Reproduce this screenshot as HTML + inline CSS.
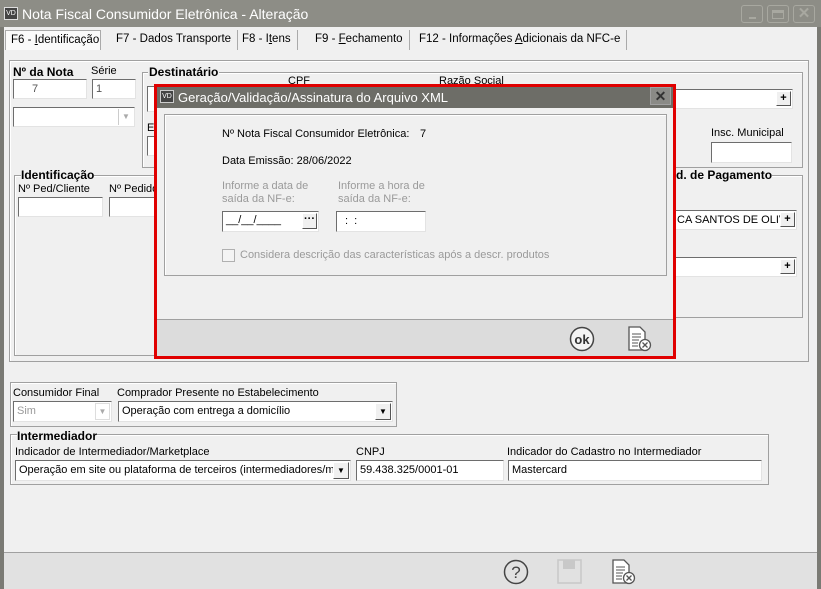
<!DOCTYPE html><html><head><meta charset="utf-8"><style>
*{box-sizing:border-box;margin:0;padding:0}
body{width:821px;height:589px;position:relative;overflow:hidden;background:#f0f0f0;font-family:"Liberation Sans",sans-serif;font-size:11px;color:#000}
.a{position:absolute;white-space:nowrap}
.in{position:absolute;white-space:nowrap;overflow:hidden;background:#fff;border:1px solid #a0a0a0;border-top-color:#6d6d6d;border-left-color:#6d6d6d;border-right-color:#e3e3e3;border-bottom-color:#e3e3e3;padding:2px 3px;line-height:14px}
.gb{position:absolute;border:1px solid #a0a0a0;box-shadow:inset 1px 1px 0 #fff}
.b{font-weight:bold}
.btn{position:absolute;background:#f0f0f0;border:1px solid #fff;border-right-color:#555;border-bottom-color:#555;font-size:11px;text-align:center;line-height:13px;font-weight:bold}
.tab{position:absolute;white-space:nowrap;top:30px;height:20px;line-height:18px;padding:0 6px;border-right:1px solid #aaa;font-size:11.5px}
.g{color:#9a9a9a}
</style></head><body>
<div class="a" style="left:0;top:0;width:821px;height:27px;background:#8d8d86"></div>
<div class="a" style="left:0;top:27px;width:4px;height:562px;background:#7a7a74"></div>
<div class="a" style="left:817px;top:27px;width:4px;height:562px;background:#7a7a74"></div>
<div class="a" style="left:4px;top:7px;width:14px;height:13px;background:#444;border:1px solid #ddd;color:#fff;font-size:7px;line-height:11px;text-align:center">VD</div>
<div class="a" style="left:22px;top:6px;font-size:14px;color:#fff">Nota Fiscal Consumidor Eletrônica - Alteração</div>
<div class="a" style="left:741px;top:5px;width:22px;height:18px;border:1px solid #a8a8a0;border-radius:3px"><div class="a" style="left:7px;top:11px;width:7px;height:2px;background:#a8a8a0"></div></div>
<div class="a" style="left:767px;top:5px;width:22px;height:18px;border:1px solid #a8a8a0;border-radius:3px"><div class="a" style="left:4px;top:4px;width:12px;height:9px;border:1px solid #a8a8a0;border-top-width:3px"></div></div>
<div class="a" style="left:793px;top:5px;width:22px;height:18px;border:1px solid #a8a8a0;border-radius:3px;color:#a8a8a0;font-size:15px;font-weight:bold;text-align:center;line-height:15px">✕</div>
<div class="a" style="left:4px;top:27px;width:813px;height:25px;background:#f0f0f0"></div>
<div class="tab" style="left:5px;width:96px;background:#fafafa;border:1px solid #aaa;border-bottom:none;padding:0 5px">F6 - <u>I</u>dentificação</div>
<div class="tab" style="left:110px">F7 - Dados Transporte</div>
<div class="tab" style="left:236px">F8 - I<u>t</u>ens</div>
<div class="tab" style="left:309px">F9 - <u>F</u>echamento</div>
<div class="tab" style="left:413px">F12 - Informações <u>A</u>dicionais da NFC-e</div>
<div class="gb" style="left:9px;top:60px;width:800px;height:302px"></div>
<div class="a b" style="left:13px;top:65px;font-size:12px">Nº da Nota</div>
<div class="a" style="left:91px;top:65px">Série</div>
<div class="in" style="left:13px;top:79px;width:74px;height:20px;color:#555;padding-left:18px">7</div>
<div class="in" style="left:92px;top:79px;width:44px;height:20px;color:#555">1</div>
<div class="in" style="left:13px;top:107px;width:122px;height:20px"><div class="a" style="right:1px;top:1px;width:15px;height:16px;border-left:1px solid #ccc;color:#aaa;font-size:8px;text-align:center;line-height:16px">▼</div></div>
<div class="gb" style="left:142px;top:72px;width:661px;height:96px"></div>
<div class="a b" style="left:148px;top:65px;background:#f0f0f0;padding:0 1px;font-size:12px">Destinatário</div>
<div class="a" style="left:288px;top:75px">CPF</div>
<div class="a" style="left:439px;top:75px">Razão Social</div>
<div class="in" style="left:147px;top:86px;width:10px;height:26px"></div>
<div class="in" style="left:660px;top:89px;width:133px;height:20px"><div class="btn" style="right:1px;top:1px;width:15px;height:15px">+</div></div>
<div class="a" style="left:147px;top:122px">E</div>
<div class="in" style="left:147px;top:136px;width:10px;height:20px"></div>
<div class="a" style="left:711px;top:127px">Insc. Municipal</div>
<div class="in" style="left:711px;top:142px;width:81px;height:21px"></div>
<div class="gb" style="left:14px;top:175px;width:150px;height:181px"></div>
<div class="a b" style="left:21px;top:168px;background:#f0f0f0;font-size:12px">Identificação</div>
<div class="a" style="left:18px;top:183px">Nº Ped/Cliente</div>
<div class="a" style="left:109px;top:183px">Nº Pedido</div>
<div class="in" style="left:18px;top:197px;width:85px;height:20px"></div>
<div class="in" style="left:109px;top:197px;width:60px;height:20px"></div>
<div class="gb" style="left:660px;top:175px;width:143px;height:143px"></div>
<div class="a b" style="left:676px;top:168px;background:#f0f0f0;font-size:12px">d. de Pagamento</div>
<div class="in" style="left:660px;top:210px;width:137px;height:20px;padding-left:16px">CA SANTOS DE OLIVE<div class="btn" style="right:1px;top:1px;width:15px;height:15px">+</div></div>
<div class="in" style="left:660px;top:257px;width:137px;height:20px"><div class="btn" style="right:1px;top:1px;width:15px;height:15px">+</div></div>
<div class="gb" style="left:10px;top:382px;width:387px;height:45px"></div>
<div class="a" style="left:13px;top:387px">Consumidor Final</div>
<div class="a" style="left:117px;top:387px">Comprador Presente no Estabelecimento</div>
<div class="in" style="left:13px;top:401px;width:99px;height:21px;color:#999">Sim<div class="a" style="right:1px;top:1px;width:15px;height:17px;border:1px solid #ddd;color:#aaa;font-size:8px;text-align:center;line-height:16px">▼</div></div>
<div class="in" style="left:118px;top:401px;width:275px;height:21px">Operação com entrega a domicílio<div class="btn" style="right:1px;top:1px;width:16px;height:17px;font-size:8px;line-height:15px">▼</div></div>
<div class="gb" style="left:10px;top:434px;width:759px;height:51px"></div>
<div class="a b" style="left:17px;top:429px;background:#f0f0f0;font-size:12px">Intermediador</div>
<div class="a" style="left:15px;top:446px">Indicador de Intermediador/Marketplace</div>
<div class="a" style="left:356px;top:446px">CNPJ</div>
<div class="a" style="left:507px;top:446px">Indicador do Cadastro no Intermediador</div>
<div class="in" style="left:15px;top:460px;width:336px;height:21px">Operação em site ou plataforma de terceiros (intermediadores/ma<div class="btn" style="right:1px;top:1px;width:16px;height:17px;font-size:8px;line-height:15px">▼</div></div>
<div class="in" style="left:356px;top:460px;width:148px;height:21px">59.438.325/0001-01</div>
<div class="in" style="left:508px;top:460px;width:254px;height:21px">Mastercard</div>
<div class="a" style="left:4px;top:552px;width:813px;height:37px;background:#e1e1e1;border-top:1px solid #a0a0a0"></div>
<svg class="a" style="left:502px;top:558px" width="28" height="28"><circle cx="14" cy="14" r="11.5" fill="none" stroke="#444" stroke-width="1.5"/><text x="14" y="20" font-family="Liberation Sans" font-size="17" text-anchor="middle" fill="#444">?</text></svg>
<svg class="a" style="left:557px;top:559px" width="26" height="26"><rect x="1" y="1" width="23" height="23" fill="none" stroke="#c8c8c8" stroke-width="1.5"/><rect x="6" y="1" width="12" height="9" fill="#c8c8c8"/></svg>
<svg class="a" style="left:610px;top:559px" width="26" height="26"><path d="M3 1h11l5 5v18H3z" fill="#fff" stroke="#555" stroke-width="1.3"/><path d="M6 8h9M6 11h9M6 14h7M6 17h6M6 20h6" stroke="#555"/><circle cx="19" cy="19" r="5.5" fill="#fff" stroke="#555" stroke-width="1.3"/><path d="M16.5 16.5l5 5M21.5 16.5l-5 5" stroke="#555" stroke-width="1.3"/></svg>
<div class="a" style="left:154px;top:84px;width:522px;height:275px;border:3px solid #e00000;background:#f0f0f0"></div>
<div class="a" style="left:157px;top:87px;width:516px;height:21px;background:#6d6d67"></div>
<div class="a" style="left:160px;top:90px;width:14px;height:13px;background:#444;border:1px solid #ccc;color:#fff;font-size:7px;line-height:11px;text-align:center">VD</div>
<div class="a" style="left:178px;top:90px;font-size:13px;color:#fff">Geração/Validação/Assinatura do Arquivo XML</div>
<div class="a" style="left:650px;top:87px;width:21px;height:18px;background:#8a8a86;border:1px solid #a0a0a0;color:#333;font-size:14px;font-weight:bold;text-align:center;line-height:16px">✕</div>
<div class="gb" style="left:164px;top:114px;width:503px;height:162px"></div>
<div class="a" style="left:222px;top:128px">Nº Nota Fiscal Consumidor Eletrônica:</div>
<div class="a" style="left:420px;top:128px">7</div>
<div class="a" style="left:222px;top:155px">Data Emissão: 28/06/2022</div>
<div class="a g" style="left:222px;top:180px;line-height:13px">Informe a data de<br>saída da NF-e:</div>
<div class="a g" style="left:338px;top:180px;line-height:13px">Informe a hora de<br>saída da NF-e:</div>
<div class="in" style="left:222px;top:211px;width:97px;height:21px;padding-top:1px">__/__/____<div class="btn" style="right:1px;top:1px;width:15px;height:16px;line-height:11px">···</div></div>
<div class="in" style="left:336px;top:211px;width:90px;height:21px;padding-left:8px">: &nbsp;:</div>
<div class="a" style="left:222px;top:249px;width:13px;height:13px;border:1px solid #b0b0b0;background:#f4f4f4"></div>
<div class="a g" style="left:240px;top:249px">Considera descrição das características após a descr. produtos</div>
<div class="a" style="left:157px;top:319px;width:516px;height:37px;background:#dcdcdc;border-top:1px solid #a0a0a0"></div>
<svg class="a" style="left:569px;top:326px" width="26" height="26"><circle cx="13" cy="13" r="11.5" fill="#f4f4f4" stroke="#444" stroke-width="1.5"/><text x="13" y="18" font-family="Liberation Sans" font-weight="bold" font-size="13" text-anchor="middle" fill="#333">ok</text></svg>
<svg class="a" style="left:626px;top:326px" width="26" height="26"><path d="M3 1h11l5 5v18H3z" fill="#fff" stroke="#555" stroke-width="1.3"/><path d="M6 8h9M6 11h9M6 14h7M6 17h6M6 20h6" stroke="#555"/><circle cx="19" cy="19" r="5.5" fill="#fff" stroke="#555" stroke-width="1.3"/><path d="M16.5 16.5l5 5M21.5 16.5l-5 5" stroke="#555" stroke-width="1.3"/></svg>
</body></html>
